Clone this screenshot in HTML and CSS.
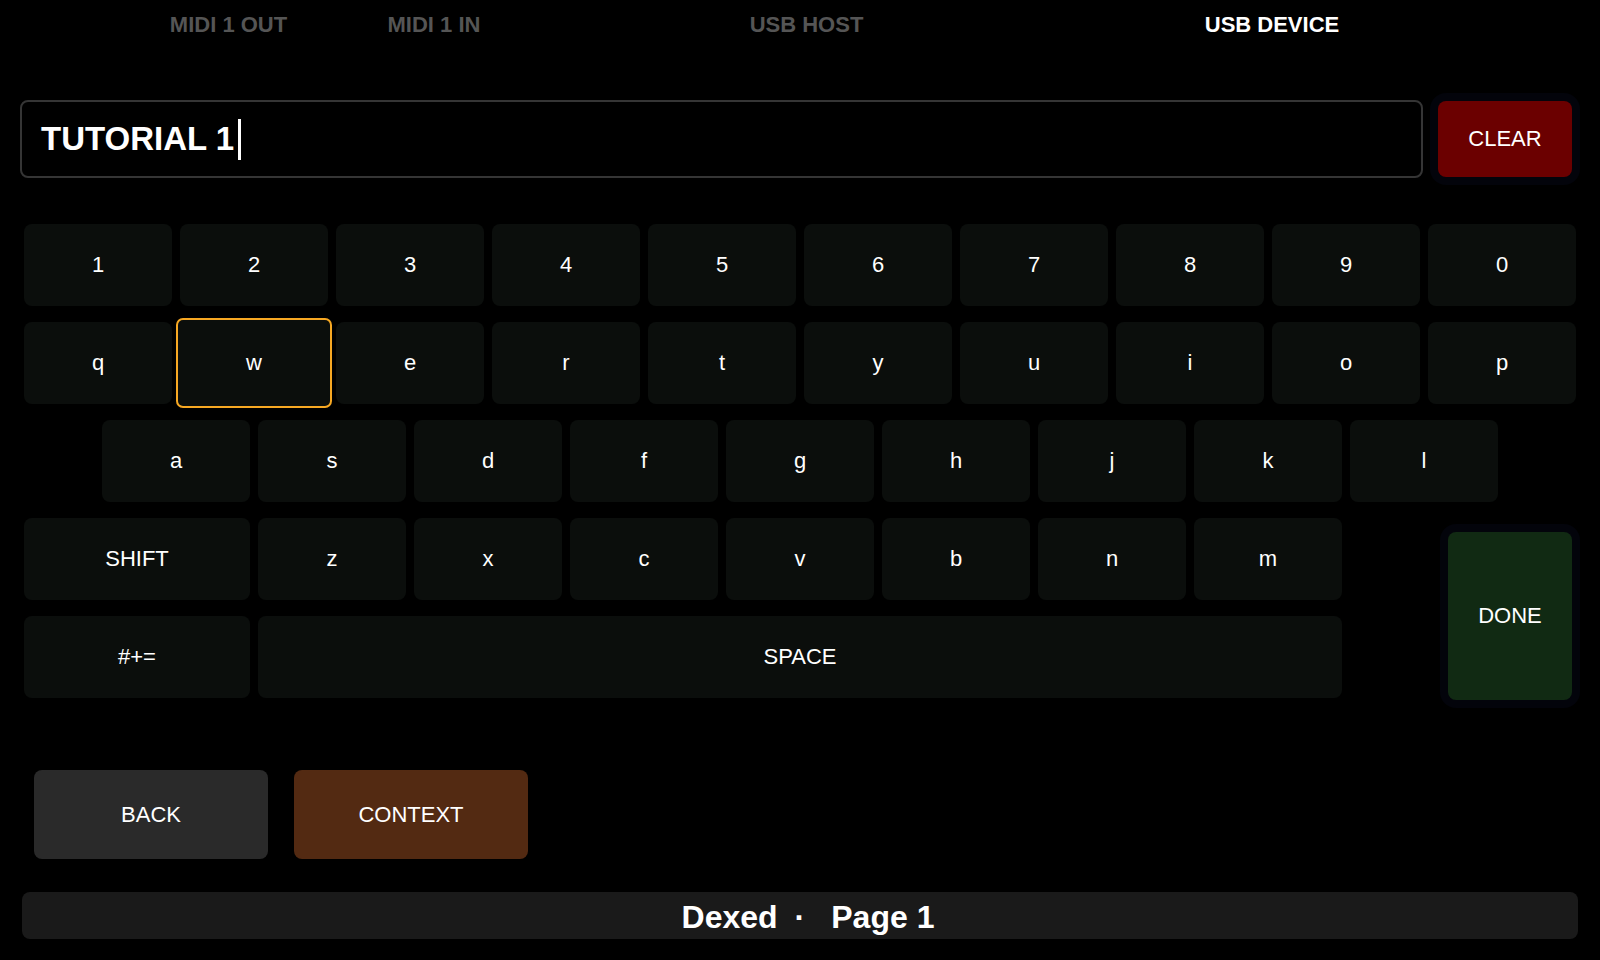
FILE: index.html
```html
<!DOCTYPE html>
<html lang="en">
<head>
<meta charset="utf-8">
<title>Keyboard</title>
<link rel="stylesheet" href="styles.css">
</head>
<body>
<div class="screen">
  <nav class="tabs">
    <span class="tab">MIDI 1 OUT</span>
    <span class="tab">MIDI 1 IN</span>
    <span class="tab">USB HOST</span>
    <span class="tab active">USB DEVICE</span>
  </nav>

  <div class="input-row">
    <div class="field"><span class="value">TUTORIAL 1</span><span class="caret"></span></div>
    <button class="clear">CLEAR</button>
  </div>

  <div class="keyboard">
    <div class="key">1</div><div class="key">2</div><div class="key">3</div><div class="key">4</div><div class="key">5</div>
    <div class="key">6</div><div class="key">7</div><div class="key">8</div><div class="key">9</div><div class="key">0</div>

    <div class="key">q</div><div class="key selected">w</div><div class="key">e</div><div class="key">r</div><div class="key">t</div>
    <div class="key">y</div><div class="key">u</div><div class="key">i</div><div class="key">o</div><div class="key">p</div>

    <div class="key offset">a</div><div class="key">s</div><div class="key">d</div><div class="key">f</div><div class="key">g</div>
    <div class="key">h</div><div class="key">j</div><div class="key">k</div><div class="key">l</div>

    <div class="key wide">SHIFT</div><div class="key">z</div><div class="key">x</div><div class="key">c</div><div class="key">v</div>
    <div class="key">b</div><div class="key">n</div><div class="key">m</div>

    <div class="key wide">#+=</div><div class="key space">SPACE</div>

    <button class="done">DONE</button>
  </div>

  <div class="actions">
    <button class="btn back">BACK</button>
    <button class="btn context">CONTEXT</button>
  </div>

  <div class="status">
    <span>Dexed</span><span class="sep">·</span><span>Page 1</span>
  </div>
</div>
</body>
</html>
```

FILE: styles.css
```css
* { box-sizing: border-box; }

html, body {
  margin: 0;
  padding: 0;
  background: #000;
}

body {
  width: 1600px;
  height: 960px;
  overflow: hidden;
  color: #fff;
  font-family: "Liberation Sans", Arial, sans-serif;
}

.screen {
  display: flex;
  flex-direction: column;
}

/* top tabs */
.tabs {
  display: grid;
  grid-template-columns: 217px 194px 551px 380px;
  padding: 12px 0 0 120px;
  height: 38px;
}

.tab {
  text-align: center;
  font-size: 22px;
  font-weight: bold;
  line-height: 26px;
  color: #555;
}

.tab.active { color: #fff; }

/* input row */
.input-row {
  display: flex;
  align-items: center;
  gap: 15px;
  margin-top: 62px;
  padding: 0 28px 0 20px;
  height: 78px;
}

.field {
  flex: 1;
  height: 78px;
  border: 2px solid #353535;
  border-radius: 8px;
  background: #000;
  display: flex;
  align-items: center;
  padding-left: 19px;
}

.value {
  font-size: 33px;
  font-weight: bold;
}

.caret {
  display: inline-block;
  width: 3px;
  height: 41px;
  margin-left: 4px;
  background: #fff;
}

.clear {
  width: 134px;
  height: 76px;
  border: 0;
  border-radius: 8px;
  background: #6b0000;
  color: #fff;
  font-family: inherit;
  font-size: 22px;
  box-shadow: 0 0 0 8px #03040b;
}

/* keyboard */
.keyboard {
  display: grid;
  grid-template-columns: repeat(20, 70px);
  grid-template-rows: repeat(5, 82px);
  column-gap: 8px;
  row-gap: 16px;
  margin: 46px 0 0 24px;
}

.key {
  grid-column: span 2;
  background: #0b0e0c;
  border-radius: 8px;
  display: flex;
  align-items: center;
  justify-content: center;
  font-size: 22px;
  color: #fff;
}

.key.offset { grid-column: 2 / span 2; }
.key.wide { grid-column: 1 / span 3; }
.key.space { grid-column: span 14; }

.key.selected {
  border-radius: 3px;
  box-shadow: 0 0 0 2px #0b0e0c, 0 0 0 4px #f7a823;
}

.done {
  grid-column: 19 / span 2;
  grid-row: 4 / span 2;
  justify-self: end;
  align-self: end;
  width: 124px;
  height: 168px;
  margin: 0 4px -2px 0;
  border: 0;
  border-radius: 8px;
  background: #112a13;
  color: #fff;
  font-family: inherit;
  font-size: 22px;
  box-shadow: 0 0 0 8px #03040b;
}

/* bottom actions */
.actions {
  display: flex;
  gap: 26px;
  margin-top: 72px;
  padding-left: 34px;
}

.btn {
  width: 234px;
  height: 89px;
  border: 0;
  border-radius: 8px;
  color: #fff;
  font-family: inherit;
  font-size: 22px;
}

.btn.back { background: #2a2a2a; }
.btn.context { background: #532a12; }

/* status bar */
.status {
  margin: 33px 22px 0;
  height: 47px;
  border-radius: 8px;
  background: #1a1a1a;
  display: flex;
  align-items: center;
  justify-content: center;
  padding: 3px 0 0 16px;
  font-size: 32px;
  font-weight: bold;
}

.sep {
  margin: 0 26px 0 17px;
}
```
